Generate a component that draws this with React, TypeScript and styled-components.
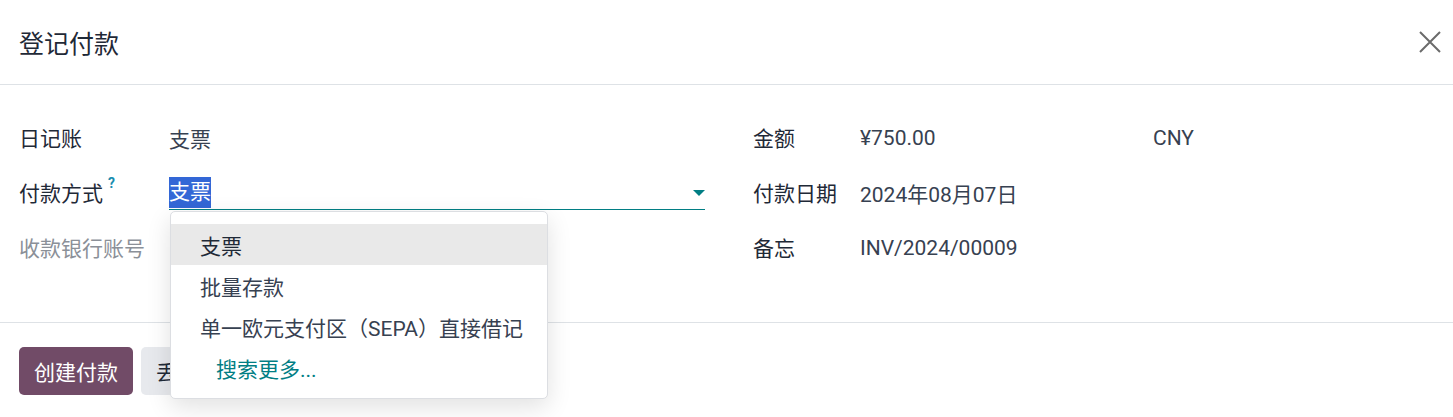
import React from "react";
import styled, { createGlobalStyle } from "styled-components";

const Global = createGlobalStyle`
  html, body { margin: 0; padding: 0; background: #fff; }
  body {
    font-family: "Roboto", "Noto Sans CJK SC", sans-serif;
    color: #374151;
    font-size: 21px;
  }
`;

const Dialog = styled.div`
  width: 1453px;
  height: 417px;
  background: #fff;
  display: flex;
  flex-direction: column;
  overflow: hidden;
`;

const Header = styled.header`
  flex: none;
  height: 85px;
  box-sizing: border-box;
  border-bottom: 1px solid #dee2e6;
  display: flex;
  align-items: center;
  justify-content: space-between;
  padding: 0 8px 0 19px;
`;

const Title = styled.h4`
  margin: 0;
  font-size: 25px;
  font-weight: 400;
  color: #1f2937;
`;

const CloseButton = styled.button`
  border: none;
  background: transparent;
  padding: 0;
  width: 30px;
  height: 30px;
  display: flex;
  align-items: center;
  justify-content: center;
  cursor: pointer;
`;

const Body = styled.main`
  flex: none;
  height: 238px;
  box-sizing: border-box;
  padding: 25px 19px 0 19px;
  display: grid;
  grid-template-columns: 686px 1fr;
  column-gap: 48px;
  border-bottom: 1px solid #dee2e6;
`;

const Column = styled.div`
  display: flex;
  flex-direction: column;
`;

const Row = styled.div`
  display: flex;
  align-items: center;
  height: 55px;
`;

const Label = styled.div<{ $w: number; $muted?: boolean }>`
  width: ${(p) => p.$w}px;
  flex: 0 0 auto;
  color: ${(p) => (p.$muted ? "#8b9098" : "#1f2937")};
  display: flex;
  align-items: flex-start;
  margin-top: -2px;
`;

const Help = styled.sup`
  color: #1a8db0;
  font-weight: 700;
  font-size: 14px;
  margin-left: 5px;
  line-height: 1;
  position: relative;
  top: -1px;
`;

const Value = styled.div<{ $w?: number }>`
  color: #374151;
  ${(p) => (p.$w ? `width: ${p.$w}px;` : "")}
`;

const Field = styled.div`
  position: relative;
  flex: 1;
  height: 34px;
  border-bottom: 1px solid #017e84;
  display: flex;
  align-items: center;
  justify-content: space-between;
`;

const Selected = styled.span`
  background: #3367d6;
  color: #fff;
  line-height: 31px;
  display: inline-block;
`;

const Caret = styled.span`
  width: 0;
  height: 0;
  border-left: 6px solid transparent;
  border-right: 6px solid transparent;
  border-top: 6px solid #017e84;
  margin-top: 2px;
`;

const Menu = styled.ul`
  position: absolute;
  top: 36px;
  left: 1px;
  width: 378px;
  box-sizing: border-box;
  margin: 0;
  padding: 12px 0 10px;
  list-style: none;
  background: #fff;
  border: 1px solid #dcdee2;
  border-radius: 5px;
  box-shadow: 0 8px 24px rgba(0, 0, 0, 0.12);
  z-index: 10;
`;

const MenuItem = styled.li<{ $active?: boolean; $more?: boolean }>`
  height: 41px;
  display: flex;
  align-items: center;
  padding-left: ${(p) => (p.$more ? 45 : 29)}px;
  background: ${(p) => (p.$active ? "#e9e9e9" : "transparent")};
  color: ${(p) => (p.$more ? "#017e84" : p.$active ? "#1f2937" : "#374151")};
  white-space: nowrap;
`;

const Footer = styled.footer`
  flex: none;
  padding: 24px 19px;
  display: flex;
  gap: 8px;
`;

const Button = styled.button<{ $primary?: boolean }>`
  height: 48px;
  padding: 0 15px;
  border: none;
  border-radius: 5px;
  font-family: inherit;
  font-size: 21px;
  background: ${(p) => (p.$primary ? "#714b67" : "#e7e9ed")};
  color: ${(p) => (p.$primary ? "#fff" : "#1f2937")};
  cursor: pointer;
`;

export default function App() {
  return (
    <>
      <Global />
      <Dialog>
        <Header>
          <Title>登记付款</Title>
          <CloseButton aria-label="关闭">
            <svg width="24" height="24" viewBox="0 0 24 24">
              <path d="M2 2 L22 22 M22 2 L2 22" stroke="#6b6b6b" strokeWidth="2" />
            </svg>
          </CloseButton>
        </Header>
        <Body>
          <Column>
            <Row>
              <Label $w={150}>日记账</Label>
              <Value>支票</Value>
            </Row>
            <Row>
              <Label $w={150}>
                付款方式<Help>?</Help>
              </Label>
              <Field>
                <Selected>支票</Selected>
                <Caret />
                <Menu>
                  <MenuItem $active>支票</MenuItem>
                  <MenuItem>批量存款</MenuItem>
                  <MenuItem>单一欧元支付区（SEPA）直接借记</MenuItem>
                  <MenuItem $more>搜索更多...</MenuItem>
                </Menu>
              </Field>
            </Row>
            <Row>
              <Label $w={150} $muted>
                收款银行账号
              </Label>
            </Row>
          </Column>
          <Column>
            <Row>
              <Label $w={107}>金额</Label>
              <Value $w={293}>¥750.00</Value>
              <Value>CNY</Value>
            </Row>
            <Row>
              <Label $w={107}>付款日期</Label>
              <Value>2024年08月07日</Value>
            </Row>
            <Row>
              <Label $w={107}>备忘</Label>
              <Value>INV/2024/00009</Value>
            </Row>
          </Column>
        </Body>
        <Footer>
          <Button $primary>创建付款</Button>
          <Button>丢弃</Button>
        </Footer>
      </Dialog>
    </>
  );
}
